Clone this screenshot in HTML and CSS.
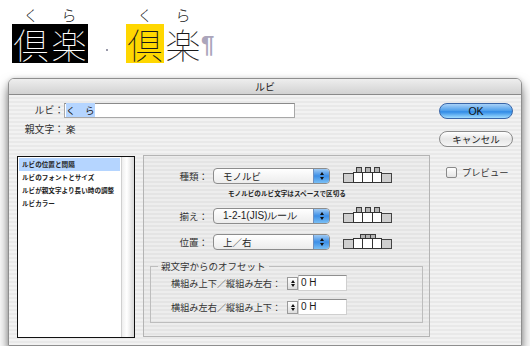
FILE: index.html
```html
<!DOCTYPE html>
<html lang="ja">
<head>
    <meta charset="UTF-8">
    <title>ルビ</title>
    <link rel="stylesheet" href="styles.css">
</head>
<body>
    <div class="sample">
        <div class="word inverted">
            <span class="ch"><span class="kana">く</span><span class="kanji">倶</span></span>
            <span class="ch"><span class="kana">ら</span><span class="kanji">楽</span></span>
        </div>
        <span class="dot"></span>
        <div class="word">
            <span class="ch"><span class="kana">く</span><span class="kanji marked">倶</span></span>
            <span class="ch"><span class="kana">ら</span><span class="kanji">楽</span></span>
            <span class="pilcrow">¶</span>
        </div>
    </div>

    <div class="dialog">
        <div class="titlebar">ルビ</div>
        <div class="dialog-body">
            <div class="main">
                <div class="ruby-row">
                    <span class="top-label">ルビ：</span>
                    <div class="text-input"><span class="selection">く　ら</span></div>
                </div>
                <div class="base-row">
                    <span class="top-label">親文字：</span>
                    <span class="base-char">楽</span>
                </div>

                <div class="lower">
                    <div class="list">
                        <ul class="list-items">
                            <li class="selected">ルビの位置と間隔</li>
                            <li>ルビのフォントとサイズ</li>
                            <li>ルビが親文字より長い時の調整</li>
                            <li>ルビカラー</li>
                        </ul>
                        <div class="scroll-track"></div>
                    </div>

                    <div class="panel">
                        <div class="option-row">
                            <span class="opt-label">種類：</span>
                            <div class="popup"><span class="popup-text">モノルビ</span><span class="popup-arrows"></span></div>
                            <svg class="align-icon" width="50" height="16" viewBox="0 0 50 16">
                                <rect x="13.5" y="0.5" width="5" height="5" fill="#b4b4b4" stroke="#3c3c3c"/>
                                <rect x="22.5" y="0.5" width="5" height="5" fill="#b4b4b4" stroke="#3c3c3c"/>
                                <rect x="31.5" y="0.5" width="5" height="5" fill="#b4b4b4" stroke="#3c3c3c"/>
                                <rect x="0.5" y="6.5" width="10" height="9" fill="#cfcfcf" stroke="#444"/>
                                <rect x="38.5" y="6.5" width="10" height="9" fill="#cfcfcf" stroke="#444"/>
                                <rect x="10.5" y="5.5" width="9" height="10" fill="#fff" stroke="#333"/>
                                <rect x="19.5" y="5.5" width="10" height="10" fill="#fff" stroke="#333"/>
                                <rect x="29.5" y="5.5" width="9" height="10" fill="#fff" stroke="#333"/>
                            </svg>
                        </div>
                        <div class="note">モノルビのルビ文字はスペースで区切る</div>

                        <div class="option-row spaced">
                            <span class="opt-label">揃え：</span>
                            <div class="popup"><span class="popup-text latin">1-2-1(JIS)ルール</span><span class="popup-arrows"></span></div>
                            <svg class="align-icon" width="50" height="16" viewBox="0 0 50 16">
                                <rect x="13.5" y="0.5" width="5" height="5" fill="#b4b4b4" stroke="#3c3c3c"/>
                                <rect x="22.5" y="0.5" width="5" height="5" fill="#b4b4b4" stroke="#3c3c3c"/>
                                <rect x="31.5" y="0.5" width="5" height="5" fill="#b4b4b4" stroke="#3c3c3c"/>
                                <rect x="0.5" y="6.5" width="10" height="9" fill="#cfcfcf" stroke="#444"/>
                                <rect x="38.5" y="6.5" width="10" height="9" fill="#cfcfcf" stroke="#444"/>
                                <rect x="10.5" y="5.5" width="9" height="10" fill="#fff" stroke="#333"/>
                                <rect x="19.5" y="5.5" width="10" height="10" fill="#fff" stroke="#333"/>
                                <rect x="29.5" y="5.5" width="9" height="10" fill="#fff" stroke="#333"/>
                            </svg>
                        </div>

                        <div class="option-row spaced">
                            <span class="opt-label">位置：</span>
                            <div class="popup"><span class="popup-text">上／右</span><span class="popup-arrows"></span></div>
                            <svg class="align-icon" width="50" height="16" viewBox="0 0 50 16">
                                <rect x="17.5" y="1.5" width="5" height="4" fill="#b4b4b4" stroke="#3c3c3c"/>
                                <rect x="22.5" y="1.5" width="5" height="4" fill="#b4b4b4" stroke="#3c3c3c"/>
                                <rect x="27.5" y="1.5" width="5" height="4" fill="#b4b4b4" stroke="#3c3c3c"/>
                                <rect x="0.5" y="6.5" width="10" height="9" fill="#cfcfcf" stroke="#444"/>
                                <rect x="38.5" y="6.5" width="10" height="9" fill="#cfcfcf" stroke="#444"/>
                                <rect x="10.5" y="5.5" width="9" height="10" fill="#fff" stroke="#333"/>
                                <rect x="19.5" y="5.5" width="10" height="10" fill="#fff" stroke="#333"/>
                                <rect x="29.5" y="5.5" width="9" height="10" fill="#fff" stroke="#333"/>
                            </svg>
                        </div>

                        <fieldset class="group">
                            <legend>親文字からのオフセット</legend>
                            <div class="offset-row">
                                <span class="offset-label">横組み上下／縦組み左右：</span>
                                <span class="stepper"></span>
                                <span class="num-field">0 H</span>
                            </div>
                            <div class="offset-row">
                                <span class="offset-label">横組み左右／縦組み上下：</span>
                                <span class="stepper"></span>
                                <span class="num-field">0 H</span>
                            </div>
                        </fieldset>
                    </div>
                </div>
            </div>

            <div class="side">
                <button class="btn btn-default">OK</button>
                <button class="btn">キャンセル</button>
                <label class="check"><span class="check-box"></span>プレビュー</label>
            </div>
        </div>
    </div>
</body>
</html>
```

FILE: styles.css
```css
body {
    margin: 0;
    background-color: #fff;
    font-family: "Noto Sans CJK JP", "Noto Sans", sans-serif;
    color: #1a1a1a;
}

/* Ruby sample at the top */
.sample {
    display: flex;
    align-items: flex-end;
    padding: 5px 0 0 12px;
}

.word {
    display: flex;
    align-items: flex-end;
}

.ch {
    display: flex;
    flex-direction: column;
    align-items: center;
    width: 38px;
}

.kana {
    font-size: 15px;
    line-height: 19px;
    height: 19px;
    font-weight: 300;
}

.kanji {
    width: 38px;
    font-size: 35px;
    line-height: 39px;
    font-weight: 100;
    text-align: center;
}

.word.inverted .kanji {
    background-color: #000;
    color: #fff;
}

.kanji.marked {
    background-color: #ffd700;
}

.dot {
    width: 2px;
    height: 2px;
    background-color: #9a9aaa;
    margin: 0 18px 12px 18px;
}

.pilcrow {
    font-family: "Liberation Sans", sans-serif;
    font-size: 24px;
    line-height: 24px;
    font-weight: bold;
    color: #aba5bb;
    margin: 0 0 6px -1px;
}

/* Dialog */
.dialog {
    margin: 15px 0 0 8px;
    width: 514px;
    height: 268px;
    box-sizing: border-box;
    border: 1px solid #8e8e8e;
    border-radius: 6px 6px 0 0;
    background: repeating-linear-gradient(#f2f2f2 0 2px, #e9e9e9 2px 4px);
    box-shadow: 0 7px 12px rgba(0, 0, 0, 0.55), 0 0 4px rgba(0, 0, 0, 0.12);
}

.titlebar {
    height: 15px;
    border-bottom: 1px solid #8a8a8a;
    border-radius: 5px 5px 0 0;
    background: linear-gradient(#eeeeee, #d2d2d2);
    text-align: center;
    font-size: 10px;
    line-height: 15px;
    color: #222;
}

.dialog-body {
    display: flex;
    padding: 7px 8px 0 8px;
}

.main {
    width: 413px;
}

.top-label {
    width: 47px;
    text-align: right;
    font-size: 9.8px;
    color: #333;
}

.ruby-row {
    display: flex;
    align-items: center;
    height: 16px;
}

.text-input {
    width: 231px;
    height: 15px;
    box-sizing: border-box;
    background-color: #fff;
    border: 1px solid #a8a8a8;
    border-top-color: #8a8a8a;
    padding: 0 0 0 1px;
    font-size: 9.5px;
    line-height: 13px;
}

.selection {
    background-color: #b5d5ff;
}

.base-row {
    display: flex;
    align-items: center;
    height: 12px;
    margin-top: 5px;
}

.base-char {
    margin-left: 2px;
    font-size: 9.5px;
}

.lower {
    display: flex;
    align-items: flex-start;
    gap: 8px;
    margin-top: 20px;
}

/* Category list */
.list {
    display: flex;
    width: 118px;
    height: 182px;
    margin-top: 1px;
    box-sizing: border-box;
    border: 1px solid #111;
    background-color: #fff;
}

.list-items {
    flex: 1;
    list-style: none;
    margin: 0;
    padding: 1px 1px 0 1px;
}

.list-items li {
    height: 13px;
    padding-left: 3px;
    font-size: 6.6px;
    line-height: 13px;
    font-weight: bold;
    color: #222;
    white-space: nowrap;
}

.list-items li.selected {
    background-color: #b5d5ff;
}

.scroll-track {
    width: 12px;
    background: linear-gradient(to right, #eeeeee, #ffffff 40%, #d8d8d8);
    border-left: 1px solid #d0d0d0;
}

/* Settings panel */
.panel {
    width: 287px;
    height: 182px;
    box-sizing: border-box;
    border: 1px solid #b4b4b4;
    background-color: rgba(0, 0, 0, 0.02);
    padding-top: 12px;
}

.option-row {
    display: flex;
    align-items: center;
    height: 16px;
}

.option-row.spaced {
    margin-top: 10px;
}

.opt-label {
    width: 64px;
    margin-right: 5px;
    text-align: right;
    font-size: 9.5px;
    color: #333;
}

.popup {
    display: flex;
    width: 117px;
    height: 16px;
    box-sizing: border-box;
    border: 1px solid #8c8c8c;
    border-radius: 4px;
    background: linear-gradient(#ffffff, #ececec);
    overflow: hidden;
}

.popup-text {
    flex: 1;
    padding-left: 9px;
    font-size: 9.5px;
    line-height: 14px;
    color: #222;
}

.popup-text.latin {
    font-family: "Liberation Sans", sans-serif;
    font-size: 10px;
}

.popup-arrows {
    width: 15px;
    display: flex;
    flex-direction: column;
    align-items: center;
    justify-content: center;
    gap: 2px;
    border-left: 1px solid #6d8fbf;
    background: linear-gradient(#9fcaf4, #3c8ee6 50%, #79bff5);
}

.popup-arrows::before,
.popup-arrows::after,
.stepper::before,
.stepper::after {
    content: "";
    border-left: 2.5px solid transparent;
    border-right: 2.5px solid transparent;
}

.popup-arrows::before,
.stepper::before {
    border-bottom: 3px solid #111;
}

.popup-arrows::after,
.stepper::after {
    border-top: 3px solid #111;
}

.align-icon {
    margin-left: 13px;
    margin-top: -2px;
}

.note {
    margin-top: 4px;
    padding-left: 84px;
    font-size: 6.6px;
    line-height: 10px;
    font-weight: bold;
    color: #222;
}

/* Offset group */
.group {
    margin: 10px 0 0 6px;
    width: 273px;
    height: 63px;
    box-sizing: border-box;
    padding: 3px 0 0 0;
    border: 1px solid #bdbdbd;
}

.group legend {
    margin-left: 7px;
    padding: 0 3px;
    font-size: 9.5px;
    line-height: 12px;
    color: #333;
}

.offset-row {
    display: flex;
    align-items: center;
    height: 16px;
    margin-bottom: 8px;
    padding-left: 20px;
}

.offset-label {
    width: 116px;
    font-size: 9.2px;
    color: #333;
    white-space: nowrap;
}

.stepper {
    width: 9px;
    height: 11px;
    display: flex;
    flex-direction: column;
    align-items: center;
    justify-content: center;
    gap: 1px;
    border: 1px solid #9a9a9a;
    background: linear-gradient(#fff, #ddd);
}

.num-field {
    width: 49px;
    height: 16px;
    box-sizing: border-box;
    background-color: #fff;
    border: 1px solid #cfcfcf;
    border-top-color: #8f8f8f;
    padding-left: 2px;
    font-family: "Liberation Sans", sans-serif;
    font-size: 10px;
    line-height: 13px;
}

/* Buttons on the right */
.side {
    margin-left: 9px;
    width: 74px;
    display: flex;
    flex-direction: column;
}

.btn {
    height: 16px;
    padding: 0;
    margin-top: 12px;
    border: 1px solid #8a8a8a;
    border-radius: 8px;
    background: linear-gradient(#ffffff, #e6e6e6 50%, #f6f6f6);
    font-family: "Noto Sans CJK JP", sans-serif;
    font-size: 9.5px;
    line-height: 14px;
    color: #222;
}

.btn-default {
    margin-top: 1px;
    border-color: #3a66a8;
    background: linear-gradient(#a8d2f8, #4a9cea 50%, #2f8ae6 55%, #9fdcff);
    font-family: "Liberation Sans", sans-serif;
    font-size: 10.5px;
    color: #111;
}

.check {
    display: flex;
    align-items: center;
    margin: 18px 0 0 7px;
    font-size: 9.3px;
    color: #333;
}

.check-box {
    width: 9px;
    height: 9px;
    margin-right: 5px;
    border: 1px solid #8a8a8a;
    border-radius: 2px;
    background: linear-gradient(#fff, #e4e4e4);
}
```
